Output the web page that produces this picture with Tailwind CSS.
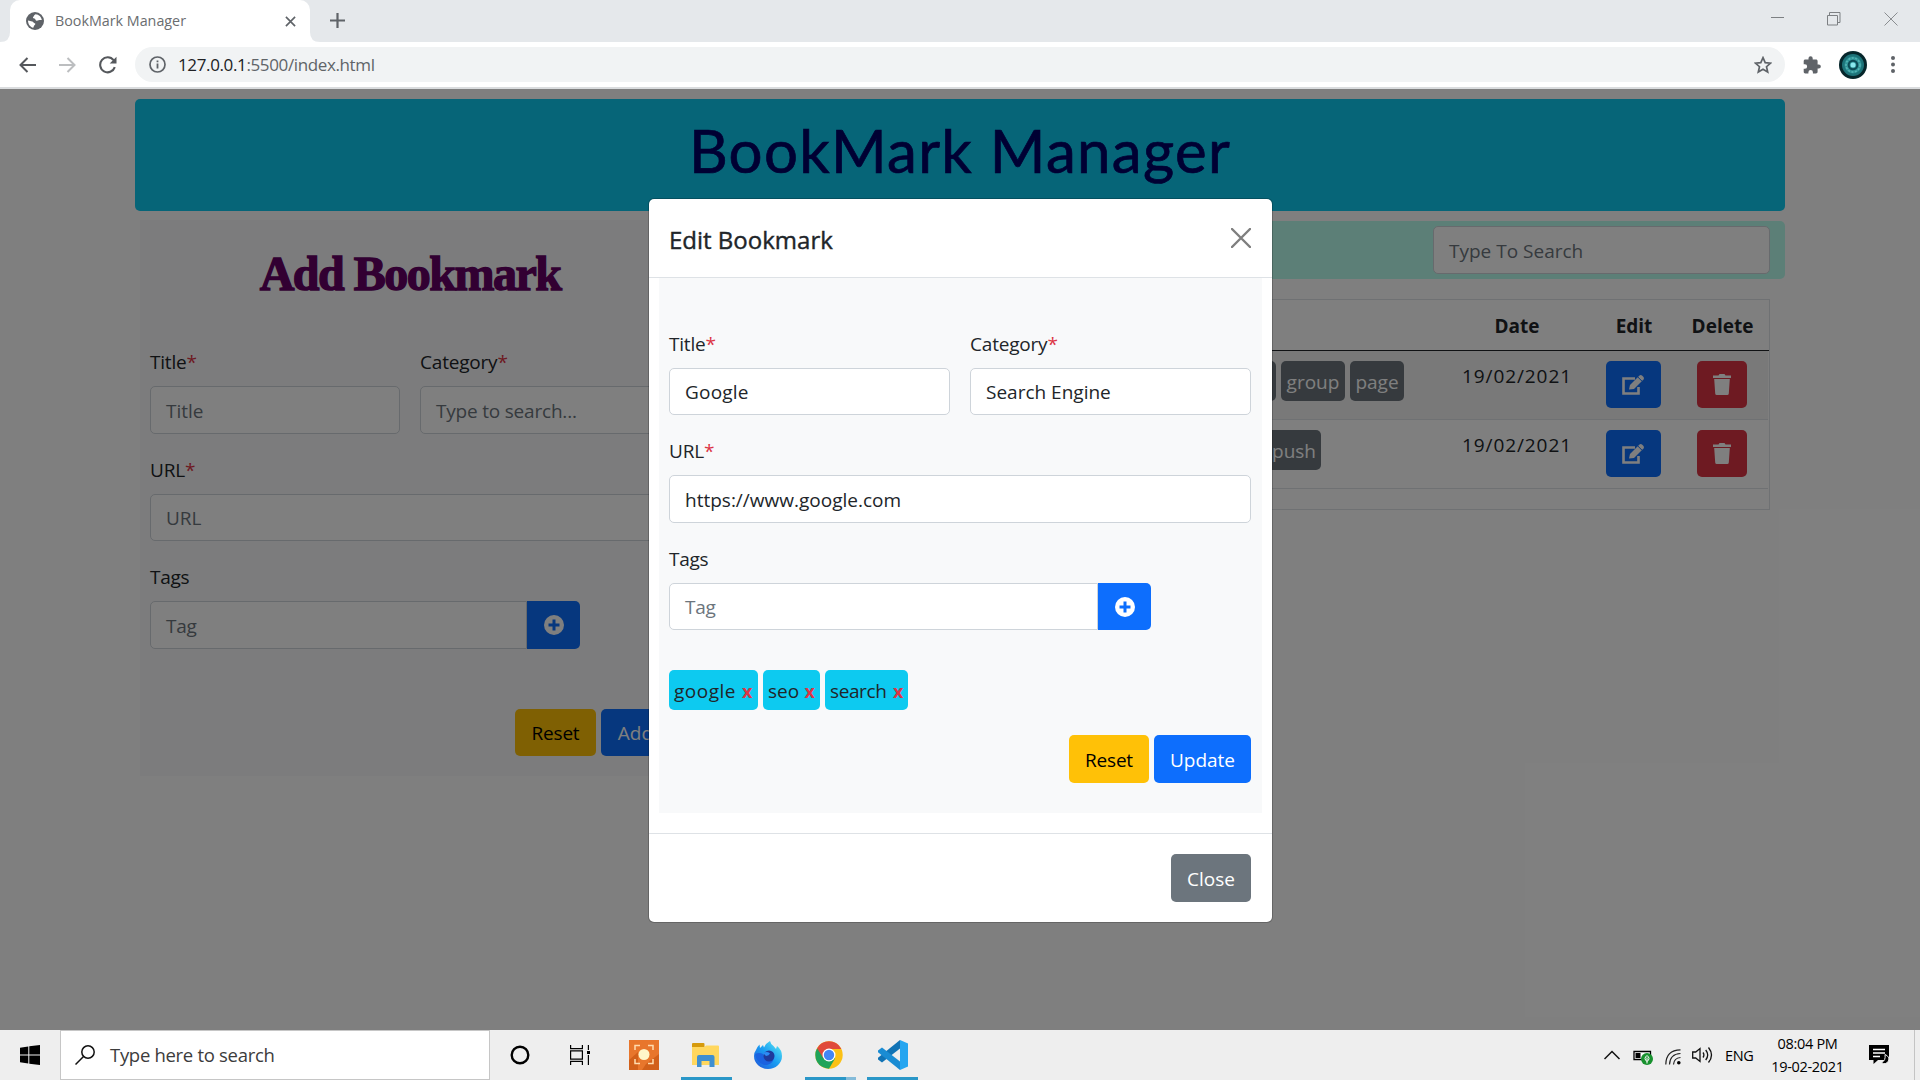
<!DOCTYPE html>
<html lang="en">
<head>
<meta charset="utf-8">
<title>BookMark Manager</title>
<script src="https://cdn.jsdelivr.net/npm/@tailwindcss/browser@4"></script>
</head>
<body class="w-[1920px] h-[1080px] overflow-hidden flex flex-col bg-white text-[#212529] text-[19px] font-['Open_Sans',sans-serif]">

<!-- Tab strip -->
<header class="h-[42px] bg-[#e5e8eb] flex shrink-0 text-[#5f6368]">
  <svg class="w-[10px] h-[42px]" viewBox="0 0 10 42"><path d="M10 32V42H0Q10 42 10 32Z" fill="#fff"/></svg>
  <div class="w-[300px] bg-white rounded-t-[10px] flex items-center pl-4 pr-[14px]">
    <svg class="size-[18px]" viewBox="0 0 18 18"><circle cx="9" cy="9" r="9" fill="#5f6368"/><path d="M2 8.5 6.2 9.6c1.2.3 1 1.4 2.4 1.7 1.2.3.8 1.3-.2 1.9-.6.5-.4 1.6-1.2 2.6C4 15 2 12 2 8.5ZM9.500 2.200c-1.700.8-1.200 1.900-2.200 2.500-.8.6-.2 1.700.9 1.700 1.500.2.9 1.800 2.300 2.300 1.400.3 2.500-1 5.300-.6C15.500 5 13 2.400 9.500 2.200Z" fill="#fff"/></svg>
    <span class="ml-[11px] text-[14.3px] text-[#6a6d70] grow">BookMark Manager</span>
    <svg class="size-[11px]" viewBox="0 0 12 12" stroke="#5f6368" stroke-width="1.8"><path d="M1 1 11 11M11 1 1 11"/></svg>
  </div>
  <svg class="w-[10px] h-[42px]" viewBox="0 0 10 42"><path d="M0 32V42H10Q0 42 0 32Z" fill="#fff"/></svg>
  <svg class="size-[15px] mt-[13px] ml-[10px]" viewBox="0 0 15 15" stroke="#5f6368" stroke-width="2.200"><path d="M7.500 0V15M0 7.500H15"/></svg>
  <div class="ml-auto flex mr-[22px] mt-[12px] gap-[43px]">
    <svg class="w-[13px] h-[14px]" viewBox="0 0 13 14" stroke="#7d8083"><path d="M0 5.500H13"/></svg>
    <svg class="size-[14px]" viewBox="0 0 14 14" fill="none" stroke="#7d8083"><path d="M.5 3.500h10v9.500H.5ZM2.500 3.500V.5h10.500v10h-2.500"/></svg>
    <svg class="size-[14px]" viewBox="0 0 14 14" fill="none" stroke="#8a8d90"><path d="M.5.5 13.500 13.500M13.500.5.5 13.500"/></svg>
  </div>
</header>

<!-- Toolbar -->
<nav class="h-[47px] border-b-2 border-[#dadcde] flex shrink-0 items-center pl-[19px]">
  <svg class="w-[17px] h-[16px]" viewBox="0 0 17 16" fill="none" stroke="#55585c" stroke-width="2"><path d="M17 8H1.500M8.500 1 1.500 8l7 7"/></svg>
  <svg class="w-[17px] h-[16px] ml-[23px]" viewBox="0 0 17 16" fill="none" stroke="#bcbec0" stroke-width="2"><path d="M0 8H15.500M8.500 1l7 7-7 7"/></svg>
  <svg class="w-[18px] h-[18px] ml-[23px]" viewBox="0 0 18 18" fill="none" stroke="#55585c" stroke-width="2.100"><path d="M15.800 11.200A7.500 7.500 0 1 1 14.600 4.200"/><path d="M17.500.8V7.600H10.700Z" fill="#55585c" stroke="none"/></svg>
  <div class="ml-[18px] w-[1650px] h-[35px] rounded-full bg-[#f1f3f4] flex items-center pl-[14px] pr-[13px]">
    <svg class="size-[17px]" viewBox="0 0 17 17"><circle cx="8.500" cy="8.500" r="7.500" fill="none" stroke="#5f6368" stroke-width="1.700"/><path d="M7.600 7.500h1.800v5H7.600ZM7.600 4.400h1.800v1.800H7.600Z" fill="#5f6368"/></svg>
    <span class="ml-[12px] text-[17px] tracking-[-0.37px] text-[#606468] grow"><span class="text-[#202124]">127.0.0.1</span>:5500/index.html</span>
    <svg class="size-[18px]" viewBox="0 0 18 18" fill="none" stroke="#5f6368" stroke-width="1.700"><path d="m9 1.700 2.200 5 5.300.5-4 3.500 1.200 5.300L9 13.200 4.300 16l1.200-5.300-4-3.500 5.300-.5Z"/></svg>
  </div>
  <svg class="size-[18px] ml-[18px]" viewBox="0 0 18 18" fill="#5f6368"><path d="M15.800 8.400h-1.200V5.100c0-.9-.7-1.600-1.600-1.600H9.700V2.300a2.100 2.100 0 0 0-4.200 0v1.200H2.300C1.400 3.500.7 4.200.7 5.100v3.100h1.200a2.200 2.200 0 0 1 0 4.500H.7v3.100c0 .9.700 1.600 1.600 1.600h3.100v-1.200a2.200 2.200 0 0 1 4.500 0v1.200H13c.9 0 1.600-.7 1.600-1.600v-3.300h1.200a2 2 0 0 0 0-4.100Z"/></svg>
  <svg class="size-[28px] ml-[18px]" viewBox="0 0 28 28" fill="none"><circle cx="14" cy="14" r="14" fill="#06262b"/><circle cx="14" cy="14" r="11" fill="#1d7379"/><circle cx="14" cy="14" r="8.500" fill="#2f9296"/><circle cx="14" cy="14" r="7" stroke="#55b5b5" stroke-width="1.500" stroke-dasharray="2 1.500"/><circle cx="14" cy="14" r="4.300" stroke="#0c4a55" stroke-width="2"/><circle cx="14" cy="14" r="2.500" fill="#8be8ee"/></svg>
  <svg class="w-[4px] h-[17px] ml-[24px]" viewBox="0 0 4 17" fill="#5f6368"><circle cx="2" cy="2" r="2"/><circle cx="2" cy="8.500" r="2"/><circle cx="2" cy="15" r="2"/></svg>
</nav>

<!-- Page -->
<main class="relative h-[941px] shrink-0 overflow-hidden bg-white">
  <div class="w-[1650px] ml-[135px] pt-[10px]">
    <h1 class="h-[112px] rounded-[5px] bg-[#0dcaf0] text-[#000066] text-center font-['Lato',sans-serif] text-[60px] leading-[102px] tracking-[1.3px] [-webkit-text-stroke:0.7px_#000066]">BookMark Manager</h1>
    <div class="flex items-start pt-[9px]">
      <section class="ml-[5px] w-[540px] h-[556px] bg-[#f8f9fa] px-[10px]">
        <h2 class="h-[126px] text-center text-[#640064] font-['Liberation_Serif',serif] font-bold text-[48px] leading-[108px] tracking-[-1.5px] [-webkit-text-stroke:1.4px_#640064]">Add Bookmark</h2>
        <div class="grid grid-cols-2 gap-5">
          <div>
            <label class="block h-[30px] mb-[10px] leading-[32px] tracking-[-0.2px]">Title<span class="text-[#dc3545]">*</span></label>
            <div class="h-[47.5px] border border-[#ced4da] rounded-[5px] bg-white px-[15px] pt-[2px] flex items-center text-[#6c757d]">Title</div>
          </div>
          <div>
            <label class="block h-[30px] mb-[10px] leading-[32px] tracking-[-0.2px]">Category<span class="text-[#dc3545]">*</span></label>
            <div class="h-[47.5px] border border-[#ced4da] rounded-[5px] bg-white px-[15px] pt-[2px] flex items-center text-[#6c757d] tracking-[-0.2px]">Type to search...</div>
          </div>
        </div>
        <label class="block h-[30px] mb-[10px] mt-5 leading-[32px] tracking-[-0.2px]">URL<span class="text-[#dc3545]">*</span></label>
        <div class="h-[47.5px] border border-[#ced4da] rounded-[5px] bg-white px-[15px] pt-[2px] flex items-center text-[#6c757d]">URL</div>
        <label class="block h-[30px] mb-[10px] mt-5 leading-[32px] tracking-[-0.3px]">Tags</label>
        <div class="flex h-[47.5px] w-[430px]">
          <div class="grow border border-[#ced4da] rounded-l-[5px] bg-white px-[15px] pt-[2px] flex items-center text-[#6c757d] tracking-[-0.3px]">Tag</div>
          <div class="w-[53px] bg-[#0d6efd] rounded-r-[5px] grid place-items-center">
            <svg class="size-5" viewBox="0 0 20 20"><circle cx="10" cy="10" r="10" fill="#fff"/><path d="M10 4.500v11M4.500 10h11" stroke="#0d6efd" stroke-width="3"/></svg>
          </div>
        </div>
        <div class="flex justify-end gap-[5px] mt-[60px]">
          <div class="w-[81px] h-[47.5px] rounded-[5px] bg-[#ffc107] text-black pt-[2px] grid place-items-center tracking-[-0.2px]">Reset</div>
          <div class="w-[69px] h-[47.5px] rounded-[5px] bg-[#0d6efd] text-white pt-[2px] grid place-items-center">Add</div>
        </div>
      </section>
      <section class="ml-[10px] w-[1095px]">
        <div class="h-[58px] mt-px rounded-[5px] bg-[#b8ffee] flex justify-end items-center pr-[15px]">
          <div class="w-[337px] h-[47.5px] border border-[#ced4da] rounded-[5px] bg-white px-[15px] pt-[2px] flex items-center text-[#6c757d]">Type To Search</div>
        </div>
        <div class="mt-5 ml-[15px] w-[1065px] h-[211px] border border-[#dee2e6]">
          <div class="grid grid-cols-[525px_213px_146px_86px_92px] h-[51px] border-b-[1.5px] border-[#212529] font-bold text-center leading-[52px]">
            <span></span><span></span><span>Date</span><span class="pl-[2px]">Edit</span><span class="pl-px">Delete</span>
          </div>
          <div class="grid grid-cols-[525px_213px_146px_86px_92px] h-[69px] mr-px bg-[#f2f2f2] border-b border-[#dee2e6] pt-[10px]">
            <span></span>
            <div class="flex gap-[5px] h-10 text-white leading-[42px] text-center -ml-px">
              <span class="w-[46px] rounded-[5px] bg-[#6c757d]"></span>
              <span class="w-[64px] rounded-[5px] bg-[#6c757d]">group</span>
              <span class="w-[54px] rounded-[5px] bg-[#6c757d]">page</span>
            </div>
            <span class="text-center leading-[30px] tracking-[0.9px]">19/02/2021</span>
            <div class="justify-self-center w-[55px] h-[47px] rounded-[5px] bg-[#0d6efd] grid place-items-center">
              <svg class="w-[24px] h-[22px]" viewBox="0 0 24 22" fill="none" stroke="#fff"><path d="M14 4.500H2.500v15h15V13" stroke-width="2.600"/><path d="M8 15.500 9 11 18.500 1.500q1.200-1 2.500 0l1.500 1.600q1 1.200 0 2.300L13 14.900Z" fill="#fff" stroke="none"/><path d="m16.800 3 4.400 4.400" stroke="#0d6efd" stroke-width="1"/></svg>
            </div>
            <div class="justify-self-center w-[50px] h-[47px] rounded-[5px] bg-[#dc3545] grid place-items-center">
              <svg class="w-[18px] h-[21px]" viewBox="0 0 18 21" fill="#fff"><path d="M0 1.500h5.500L6.500 0h5l1 1.500H18V4H0ZM1.200 5h15.600l-1 14.500q-.1 1.500-1.600 1.500H3.800q-1.500 0-1.600-1.500Z"/></svg>
            </div>
          </div>
          <div class="grid grid-cols-[525px_213px_146px_86px_92px] h-[69px] mr-px border-b border-[#dee2e6] pt-[10px]">
            <span></span>
            <div class="flex h-10 text-white leading-[42px] -ml-px">
              <span class="w-[91px] rounded-[5px] bg-[#6c757d] pr-[5px] text-right">push</span>
            </div>
            <span class="text-center leading-[30px] tracking-[0.9px]">19/02/2021</span>
            <div class="justify-self-center w-[55px] h-[47px] rounded-[5px] bg-[#0d6efd] grid place-items-center">
              <svg class="w-[24px] h-[22px]" viewBox="0 0 24 22" fill="none" stroke="#fff"><path d="M14 4.500H2.500v15h15V13" stroke-width="2.600"/><path d="M8 15.500 9 11 18.500 1.500q1.200-1 2.500 0l1.500 1.600q1 1.200 0 2.300L13 14.900Z" fill="#fff" stroke="none"/><path d="m16.800 3 4.400 4.400" stroke="#0d6efd" stroke-width="1"/></svg>
            </div>
            <div class="justify-self-center w-[50px] h-[47px] rounded-[5px] bg-[#dc3545] grid place-items-center">
              <svg class="w-[18px] h-[21px]" viewBox="0 0 18 21" fill="#fff"><path d="M0 1.500h5.500L6.500 0h5l1 1.500H18V4H0ZM1.200 5h15.600l-1 14.500q-.1 1.500-1.600 1.500H3.800q-1.500 0-1.600-1.500Z"/></svg>
            </div>
          </div>
        </div>
      </section>
    </div>
  </div>

  <!-- Edit dialog over a dimmed backdrop -->
  <div class="absolute inset-0 bg-black/50"></div>
  <div class="absolute left-[648px] top-[109px] w-[625px] h-[725px] bg-white bg-clip-padding border border-black/20 rounded-[6px] flex flex-col">
    <div class="h-[79px] border-b border-[#dee2e6] flex items-center justify-between pl-5 pr-[21px]">
      <h5 class="text-[24px] font-medium pt-[3px] [-webkit-text-stroke:0.4px_#212529]">Edit Bookmark</h5>
      <svg class="size-5 opacity-50" viewBox="0 0 20 20" stroke="#000" stroke-width="2.400" stroke-linecap="round"><path d="M1 1 19 19M19 1 1 19"/></svg>
    </div>
    <div class="mx-[10px] h-[535px] bg-[#f8f9fa] pl-[10px] pr-[11px] pt-[50px]">
      <div class="grid grid-cols-2 gap-5">
        <div>
          <label class="block h-[30px] mb-[10px] leading-[32px] tracking-[-0.2px]">Title<span class="text-[#dc3545]">*</span></label>
          <div class="h-[47px] border border-[#ced4da] rounded-[5px] bg-white px-[15px] pt-[2px] flex items-center tracking-[0.2px]">Google</div>
        </div>
        <div>
          <label class="block h-[30px] mb-[10px] leading-[32px] tracking-[-0.2px]">Category<span class="text-[#dc3545]">*</span></label>
          <div class="h-[47px] border border-[#ced4da] rounded-[5px] bg-white px-[15px] pt-[2px] flex items-center">Search Engine</div>
        </div>
      </div>
      <label class="block h-[30px] mb-[10px] mt-5 leading-[32px] tracking-[-0.2px]">URL<span class="text-[#dc3545]">*</span></label>
      <div class="h-[48px] border border-[#ced4da] rounded-[5px] bg-white px-[15px] pt-[2px] flex items-center">https://www.google.com</div>
      <label class="block h-[30px] mb-[10px] mt-5 leading-[32px] tracking-[-0.3px]">Tags</label>
      <div class="flex h-[47px] w-[482px]">
        <div class="grow border border-[#ced4da] rounded-l-[5px] bg-white px-[15px] pt-[2px] flex items-center text-[#6c757d] tracking-[-0.3px]">Tag</div>
        <div class="w-[53px] bg-[#0d6efd] rounded-r-[5px] grid place-items-center">
          <svg class="size-5" viewBox="0 0 20 20"><circle cx="10" cy="10" r="10" fill="#fff"/><path d="M10 4.500v11M4.500 10h11" stroke="#0d6efd" stroke-width="3"/></svg>
        </div>
      </div>
      <div class="flex gap-[5px] mt-10 h-10 leading-[42px]">
        <span class="w-[89px] rounded-[5px] bg-[#0dcaf0] px-[5px] flex justify-between tracking-[0.5px]">google<b class="text-[#dc3545] text-[18px]">x</b></span>
        <span class="w-[57px] rounded-[5px] bg-[#0dcaf0] px-[5px] flex justify-between">seo<b class="text-[#dc3545] text-[18px]">x</b></span>
        <span class="w-[83px] rounded-[5px] bg-[#0dcaf0] px-[5px] flex justify-between tracking-[-0.4px]">search<b class="text-[#dc3545] text-[18px]">x</b></span>
      </div>
      <div class="flex justify-end gap-[5px] mt-[25px]">
        <div class="w-[80px] h-[48px] rounded-[5px] bg-[#ffc107] text-black pt-[2px] grid place-items-center tracking-[-0.2px]">Reset</div>
        <div class="w-[97px] h-[48px] rounded-[5px] bg-[#0d6efd] text-white pt-[2px] grid place-items-center">Update</div>
      </div>
    </div>
    <div class="mt-5 border-t border-[#dee2e6] pt-5 pr-[21px] flex justify-end">
      <div class="w-[80px] h-[48px] rounded-[5px] bg-[#6c757d] text-white pt-[2px] grid place-items-center">Close</div>
    </div>
  </div>
</main>

<!-- Taskbar -->
<footer class="h-[50px] shrink-0 bg-[#eeeeee] flex text-black">
  <div class="w-[60px] grid place-items-center"><svg class="size-5" viewBox="0 0 20 20"><path d="M0 2.800 8.300 1.500V9.500H0ZM9.300 1.300 20 0V9.500H9.300ZM0 10.500H8.300V18.500L0 17.300ZM9.300 10.500H20V20L9.300 18.700Z"/></svg></div>
  <div class="w-[430px] bg-white border border-[#c6c6c6] flex items-center pl-[14px] text-[#3c3c3c]">
    <svg class="size-5" viewBox="0 0 20 20" fill="none" stroke="#111" stroke-width="1.500"><circle cx="13" cy="7" r="6.200"/><path d="M8.500 11.500.5 19.500"/></svg>
    <span class="ml-[15px] text-[18.500px] tracking-[-0.3px]">Type here to search</span>
  </div>
  <div class="w-[60px] grid place-items-center"><svg class="size-5" viewBox="0 0 20 20"><circle cx="10" cy="10" r="8.300" fill="none" stroke="#000" stroke-width="2.400"/></svg></div>
  <div class="w-[60px] grid place-items-center"><svg class="size-5" viewBox="0 0 20 20" fill="none" stroke="#000" stroke-width="1.200"><path d="M.6 0V3.600H12.400V0M.6 20V16.400H12.400V20M.6 5.800H12.400V14.200H.6ZM18.400 0V5M18.400 10V20"/><path d="M17 6h3v3h-3Z" fill="#000" stroke="none"/></svg></div>
  <div class="w-[67px] grid place-items-center"><svg class="size-[30px]" viewBox="0 0 30 30" fill="none"><path d="M0 0H30V30H0Z" fill="#e8762c"/><path d="M0 20 9 12v18H0ZM17 24l13-10v16H13Z" fill="#d2601a"/><circle cx="15" cy="14.500" r="5.500" fill="#fff6c9"/><path d="M6 10V5.500h5M19 5.500h5V10M24 19v4.500h-5M11 23.500H6V19" stroke="#ffdcae" stroke-width="1.500"/></svg></div>
  <div class="w-[58px] grid grid-rows-[47px_3px] justify-items-center items-center">
    <svg class="w-[27px] h-[24px] mt-[3px] mr-[2px]" viewBox="0 0 27 24"><path d="M0 1q0-1 1-1h10.500q1 0 1 1v4H0Z" fill="#d69a0c"/><path d="M0 4h12.500l1.500-1.500h12q1 0 1 1V22H0Z" fill="#ffd75e"/><path d="M5 24V14q0-2 2-2h13.500q2 0 2 2v10H17.500v-6h-8v6Z" fill="#3f8fd0"/></svg>
    <i class="w-[51px] h-[3px] bg-[#2a97c8]"></i>
  </div>
  <div class="w-[66px] grid place-items-center"><svg class="size-7" viewBox="0 0 28 28"><defs><linearGradient id="fx" x1="0" y1="1" x2="1" y2="0"><stop offset="0" stop-color="#2052d8"/><stop offset=".5" stop-color="#1a9cf2"/><stop offset="1" stop-color="#5ff0f2"/></linearGradient></defs><path d="M2 9Q3 6 5.500 3.500L6 7 9 4 10 6.500Q12 2 16 0q.5 3 3.500 5L22 8l1-3q5 4 5 10A14 13 0 0 1 0 15Q0 11.500 2 9Z" fill="url(#fx)"/><path d="M1 13q4-2 8 0 1 4 5 4 4-1 6-4 1 9-7 11Q3 24 1 13Z" fill="#1a62e0"/><circle cx="15" cy="15" r="5.500" fill="#1f3a9c"/><path d="M9 12q4-2 7 .5-1 2-4 2.500Z" fill="#2d8cf5"/></svg></div>
  <div class="w-[58px] grid grid-rows-[47px_3px] justify-items-center items-center">
    <svg class="size-7 mt-[3px] -translate-x-px" viewBox="0 0 28 28"><circle cx="14" cy="14" r="13.700" fill="#fbc116"/><path d="M14 14 2.100 7.200A13.700 13.700 0 0 0 14 27.700L20 17.500Z" fill="#1fa35a"/><path d="M2.100 7.200A13.700 13.700 0 0 1 25.900 7.200L26.300 8H14L8.500 17.500Z" fill="#e04a3a"/><circle cx="14" cy="14" r="6.500" fill="#fff"/><circle cx="14" cy="14" r="5.200" fill="#4286f5"/></svg>
    <span class="flex"><i class="w-[41px] h-[3px] bg-[#2a97c8]"></i><i class="w-[10px] h-[3px] bg-[#84bbd9]"></i></span>
  </div>
  <div class="w-[67px] grid grid-rows-[47px_3px] justify-items-center items-center">
    <svg class="size-[30px] mt-[3px]" viewBox="0 0 30 30"><path d="M22 0 30 3.500v23L22 30Z" fill="#25a5f0"/><path d="M22 0v8.500L4 22.500 0 19.500q-.5-1 0-1.700Z" fill="#1173b5"/><path d="M22 30v-8.500L4 7.500 0 10.500q-.5 1 0 1.700Z" fill="#1a8cd3"/></svg>
    <i class="w-[51px] h-[3px] bg-[#2a97c8]"></i>
  </div>
  <div class="ml-auto flex items-center">
    <svg class="w-4 h-[10px]" viewBox="0 0 16 10" fill="none" stroke="#111" stroke-width="1.500"><path d="M.5 9 8 1.500 15.500 9"/></svg>
    <svg class="w-5 h-[16px] ml-[13px] mt-[3px]" viewBox="0 0 20 16"><path d="M1 2.500h16.500v8H1Z" fill="#fff" stroke="#000" stroke-width="1.300"/><path d="M2.500 4H7.500V9H2.500Z"/><circle cx="14" cy="10" r="6" fill="#17912e"/><path d="M14 6.500q4 3 0 6-4-3 0-6Zm0 2v6" fill="none" stroke="#fff"/></svg>
    <svg class="size-[16px] ml-[12px] mt-[3px]" viewBox="0 0 16 16" fill="none" stroke="#222" stroke-width="1.200"><path d="M.8 15.500Q1 1 15.500.8M4.500 15.500Q5 5 15.500 4.500M8.500 15.500Q9 9 15.500 8.500"/><circle cx="13.800" cy="13.800" r="1.800" fill="#000" stroke="none"/></svg>
    <svg class="w-[21px] h-[18px] ml-[11px]" viewBox="0 0 21 18" fill="none" stroke="#111" stroke-width="1.300"><path d="M.7 6h3L8 2.500v13L3.700 12h-3ZM11 6.500q1.800 2.500 0 5M13.700 4q4 5 0 10M16.500 1.500q6 7.500 0 15"/></svg>
    <span class="ml-[12px] w-[28px] text-[14.500px] tracking-[-0.4px] pt-px">ENG</span>
    <div class="ml-[17px] w-[75px] text-center text-[14.500px] leading-[23px] tracking-[-0.3px] whitespace-nowrap flex flex-col items-center"><span>08:04 PM</span><span>19-02-2021</span></div>
    <svg class="w-[21px] h-[20px] ml-[24px]" viewBox="0 0 21 20"><path d="M0 0H20V15H9L4.500 19V15H0Z"/><path d="M4 4.500H16M4 8H16M4 11.500H11" stroke="#fff" stroke-width="1.300"/><path d="M16 9.500q5 2 3.500 6.500-3 4.500-7 1.500 4.500-2 3.500-8Z" stroke="#eee" stroke-width="1"/></svg>
    <i class="ml-[24px] mr-[5px] w-px h-[50px] bg-[#c4c4c4]"></i>
  </div>
</footer>
</body>
</html>
